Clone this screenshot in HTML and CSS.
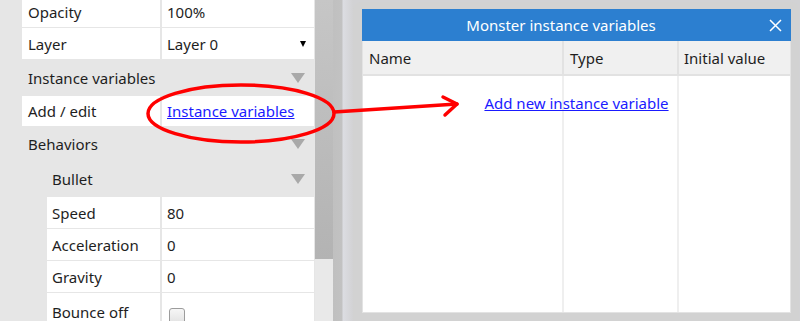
FILE: index.html
```html
<!DOCTYPE html>
<html lang="en">
<head>
<meta charset="utf-8">
<title>Monster instance variables</title>
<link rel="stylesheet" href="styles.css">
</head>
<body>
<div class="app">
  <div class="props">
    <div class="list">
      <div class="row"><div class="name">Opacity</div><div class="value">100%</div></div>
      <div class="row"><div class="name">Layer</div><div class="value select"><span>Layer 0</span><span class="caret"></span></div></div>
      <div class="cat cat-tall"><span>Instance variables</span><span class="tri"></span></div>
      <div class="row row-short"><div class="name">Add / edit</div><div class="value"><a class="link" href="#">Instance variables</a></div></div>
      <div class="cat"><span>Behaviors</span><span class="tri"></span></div>
      <div class="cat sub"><span>Bullet</span><span class="tri"></span></div>
      <div class="row sub"><div class="name">Speed</div><div class="value">80</div></div>
      <div class="row sub"><div class="name">Acceleration</div><div class="value">0</div></div>
      <div class="row sub"><div class="name">Gravity</div><div class="value">0</div></div>
      <div class="row sub row-tall"><div class="name multi">Bounce off</div><div class="value"><span class="checkbox"></span></div></div>
    </div>
  </div>
  <div class="scrollbar"><div class="thumb"></div><div class="track"></div></div>
  <div class="desk">
    <div class="dialog">
      <div class="titlebar">
        <div class="title">Monster instance variables</div>
        <div class="close">
          <svg width="13" height="13" viewBox="0 0 13 13"><path d="M1 1 L12 12 M12 1 L1 12" stroke="#fff" stroke-width="1.5" fill="none"/></svg>
        </div>
      </div>
      <div class="table">
        <div class="thead">
          <div class="th">Name</div>
          <div class="th">Type</div>
          <div class="th last">Initial value</div>
        </div>
        <div class="tbody">
          <div class="col c1"></div>
          <div class="col c2"></div>
          <div class="col c3"></div>
          <a class="link add" href="#">Add new instance variable</a>
        </div>
      </div>
    </div>
  </div>
  <svg class="annot" width="800" height="321" viewBox="0 0 800 321">
    <ellipse cx="241" cy="113.5" rx="93" ry="28.5" fill="none" stroke="#ff0000" stroke-width="3.5"/>
    <path d="M334 112 L457 104" stroke="#ff0000" stroke-width="3.5" fill="none" stroke-linecap="round"/>
    <path d="M443 97 L457 104 L445 115" stroke="#ff0000" stroke-width="3.5" fill="none" stroke-linecap="round" stroke-linejoin="round"/>
  </svg>
</div>
</body>
</html>
```

FILE: styles.css
```css
* { box-sizing: border-box; }
html, body { margin: 0; padding: 0; }
body {
  width: 800px;
  height: 321px;
  overflow: hidden;
  font-family: "Noto Sans", "Open Sans", sans-serif;
  font-size: 15px;
  color: #1e1e1e;
  background: #e6e6e6;
}
.app { position: relative; display: flex; height: 321px; }

/* property grid */
.props { width: 315px; flex: none; background: #e6e6e6; overflow: hidden; }
.list {
  display: flex;
  flex-direction: column;
  gap: 1px;
  margin-top: -4px;
  padding-left: 22px;
  padding-right: 1px;
}
.row {
  display: grid;
  grid-template-columns: 138px 1fr;
  column-gap: 2px;
  height: 31px;
}
.row-short { height: 30px; }
.row.sub { grid-template-columns: 113px 1fr; margin-left: 25px; }
.row-tall { height: 46px; }
.name, .value { background: #fff; display: flex; align-items: center; white-space: nowrap; }
.name { padding-left: 6px; }
.row.sub .name { padding-left: 5px; }
.value { padding-left: 5px; }
.name.multi { align-items: flex-start; padding-top: 9px; line-height: 20px; }
.select { justify-content: space-between; padding-right: 8px; }
.caret {
  width: 0; height: 0;
  border-left: 3.5px solid transparent;
  border-right: 3.5px solid transparent;
  border-top: 6px solid #000;
}
.cat {
  height: 34px;
  display: flex;
  align-items: center;
  justify-content: space-between;
  padding-left: 6px;
  padding-right: 9px;
}
.cat-tall { height: 35px; }
.cat.sub { margin-left: 25px; padding-left: 5px; }
.tri {
  width: 0; height: 0;
  border-left: 7.5px solid transparent;
  border-right: 7.5px solid transparent;
  border-top: 10px solid #a9a9a9;
}
.link { color: #1a1aff; text-decoration: underline; }
.checkbox {
  display: block;
  width: 16px; height: 16px;
  margin-left: 2px;
  border: 1px solid #9c9c9c;
  border-radius: 3px;
  background: linear-gradient(#f6f6f6, #e2e2e2);
}

/* scrollbar */
.scrollbar { width: 18px; flex: none; display: flex; flex-direction: column; }
.thumb { height: 259px; background: linear-gradient(#c6c6c6, #b3b3b3); }
.track { flex: 1; background: #e9e9e9; }

/* desktop area with dialog */
.desk {
  flex: 1;
  padding: 2px 1px 0 20px;
  background: linear-gradient(to right, #c0c0c0 0, #c2c2c2 9px, #dcdde2 10px, #d2d2d4 20px);
  display: flex;
}
.dialog {
  flex: 1;
  display: flex;
  flex-direction: column;
  background: #d2d2d2;
  border-radius: 8px 8px 0 0;
  padding: 7px 8px 8px 9px;
}
.titlebar {
  height: 32px;
  flex: none;
  display: flex;
  background: #2c7fd0;
  color: #fff;
}
.title { flex: 1; text-align: center; line-height: 32px; }
.close { width: 31px; display: flex; align-items: center; justify-content: center; }
.table {
  flex: 1;
  display: flex;
  flex-direction: column;
  background: #fff;
  border: 1px solid #e3e3e3;
  border-top: none;
}
.thead {
  height: 35px;
  display: grid;
  grid-template-columns: 201px 115px 1fr;
  background: #f0f0f0;
  border-bottom: 2px solid #e2e2e2;
}
.th { display: flex; align-items: center; padding-left: 6px; border-right: 2px solid #e2e2e2; }
.th.last { border-right: none; padding-left: 5px; }
.tbody {
  flex: 1;
  display: grid;
  grid-template-columns: 201px 115px 1fr;
  grid-template-rows: auto 1fr;
}
.col { grid-row: 1 / -1; border-right: 2px solid #efefef; }
.c1 { grid-column: 1; }
.c2 { grid-column: 2; }
.c3 { grid-column: 3; border-right: none; }
.add { grid-column: 1 / -1; grid-row: 1; justify-self: center; margin-top: 17px; line-height: 20px; position: relative; }

.annot { position: absolute; left: 0; top: 0; pointer-events: none; }
```
